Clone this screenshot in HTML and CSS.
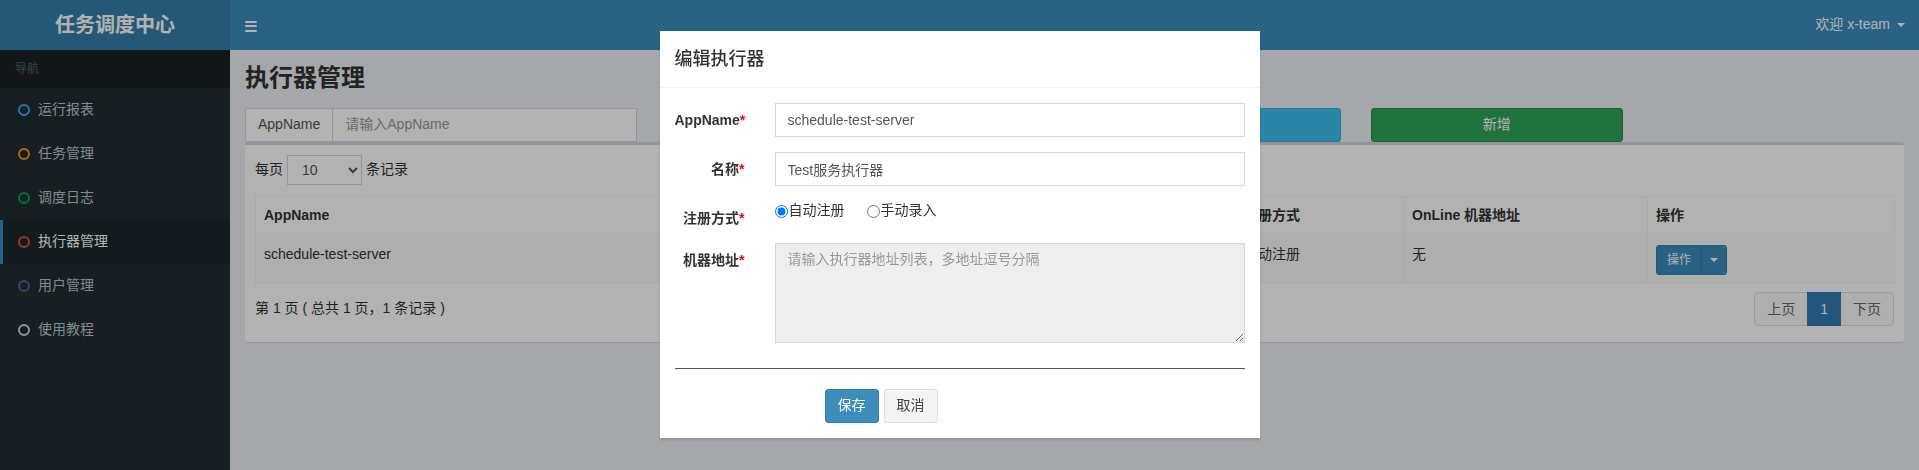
FILE: index.html
```html
<!DOCTYPE html>
<html lang="zh">
<head>
<meta charset="utf-8">
<title>任务调度中心</title>
<link rel="stylesheet" href="styles.css">
</head>
<body>
<div class="wrapper">
  <header class="main-header">
    <div class="logo">任务调度中心</div>
    <nav class="navbar">
      <div class="toggle"><span></span><span></span><span></span></div>
      <div class="user">欢迎 x-team <span class="caret"></span></div>
    </nav>
  </header>
  <div class="main">
    <aside class="sidebar">
      <div class="nav-header">导航</div>
      <ul class="menu">
        <li><i class="circle c-aqua"></i><span>运行报表</span></li>
        <li><i class="circle c-yellow"></i><span>任务管理</span></li>
        <li><i class="circle c-green"></i><span>调度日志</span></li>
        <li class="active"><i class="circle c-red"></i><span>执行器管理</span></li>
        <li><i class="circle c-purple"></i><span>用户管理</span></li>
        <li><i class="circle c-gray"></i><span>使用教程</span></li>
      </ul>
    </aside>
    <main class="content">
      <h1 class="page-title">执行器管理</h1>
      <div class="filter-row">
        <div class="col col-3">
          <div class="input-group"><span class="addon">AppName</span><input class="field" type="text" placeholder="请输入AppName"></div>
        </div>
        <div class="col col-3">
          <div class="input-group"><span class="addon addon-empty"></span><input class="field" type="text"></div>
        </div>
        <div class="col col-2"><button class="btn btn-info"></button></div>
        <div class="col col-2"><button class="btn btn-success">新增</button></div>
      </div>
      <div class="box">
        <div class="box-body">
          <div class="length-row">
            <span>每页</span>
            <select class="len-select"><option>10</option></select>
            <span>条记录</span>
          </div>
          <table class="table">
            <colgroup>
              <col class="w-app"><col class="w-name"><col class="w-order"><col class="w-type"><col class="w-online"><col class="w-op">
            </colgroup>
            <thead>
              <tr><th>AppName</th><th></th><th></th><th class="th-type">注册方式</th><th>OnLine 机器地址</th><th>操作</th></tr>
            </thead>
            <tbody>
              <tr>
                <td>schedule-test-server</td>
                <td></td>
                <td></td>
                <td>自动注册</td>
                <td>无</td>
                <td><div class="btn-group"><span class="bg-main">操作</span><span class="bg-caret"><span class="caret"></span></span></div></td>
              </tr>
            </tbody>
          </table>
          <div class="pager-row">
            <div class="info">第 1 页 ( 总共 1 页，1 条记录 )</div>
            <ul class="pagination">
              <li>上页</li>
              <li class="active">1</li>
              <li>下页</li>
            </ul>
          </div>
        </div>
      </div>
    </main>
  </div>
</div>

<div class="backdrop"></div>

<div class="modal-layer">
  <div class="modal">
    <div class="modal-header"><h4 class="modal-title">编辑执行器</h4></div>
    <div class="modal-body">
      <div class="form-group">
        <label class="form-label">AppName<span class="req">*</span></label>
        <div class="form-ctrl"><input class="form-input" type="text" value="schedule-test-server"></div>
      </div>
      <div class="form-group">
        <label class="form-label">名称<span class="req">*</span></label>
        <div class="form-ctrl"><input class="form-input" type="text" value="Test服务执行器"></div>
      </div>
      <div class="form-group">
        <label class="form-label">注册方式<span class="req">*</span></label>
        <div class="form-ctrl radios">
          <label class="radio"><input type="radio" name="addressType" checked>自动注册</label>
          <label class="radio"><input type="radio" name="addressType">手动录入</label>
        </div>
      </div>
      <div class="form-group last">
        <label class="form-label">机器地址<span class="req">*</span></label>
        <div class="form-ctrl"><textarea class="form-area" readonly placeholder="请输入执行器地址列表，多地址逗号分隔"></textarea></div>
      </div>
      <hr class="divider">
      <div class="actions">
        <button class="mbtn mbtn-primary">保存</button>
        <button class="mbtn mbtn-default">取消</button>
      </div>
    </div>
  </div>
</div>
</body>
</html>
```

FILE: styles.css
```css
* { box-sizing: border-box; }
html, body { margin: 0; height: 100%; }
body {
  font-family: "Liberation Sans", "Noto Sans CJK SC", sans-serif;
  font-size: 14px;
  line-height: 1.42857;
  color: #333;
  background: #ecf0f5;
  overflow: hidden;
}

.wrapper { display: flex; flex-direction: column; height: 470px; }

/* header */
.main-header { display: flex; height: 50px; flex: none; }
.logo {
  width: 230px; flex: none;
  background: #367fa9; color: #fff;
  font-size: 20px; font-weight: bold;
  line-height: 50px; text-align: center;
}
.navbar {
  flex: 1; background: #3c8dbc;
  display: flex; align-items: center; justify-content: space-between;
  padding: 0 14px 0 15px;
}
.toggle { display: flex; flex-direction: column; gap: 2.5px; width: 12px; margin-top: 2px; }
.toggle span { display: block; height: 2px; background: #fff; border-radius: 1px; }
.user { color: #fff; display: flex; align-items: center; gap: 7px; }
.caret {
  display: inline-block; width: 0; height: 0;
  border-top: 4px solid #fff;
  border-left: 4px solid transparent;
  border-right: 4px solid transparent;
}

/* sidebar */
.main { display: flex; flex: 1; min-height: 0; }
.sidebar { width: 230px; flex: none; background: #222d32; }
.nav-header {
  height: 38px; background: #1a2226; color: #4b646f;
  font-size: 12px; line-height: 18px; padding: 10px 15px;
}
.menu { list-style: none; margin: 0; padding: 0; }
.menu li {
  height: 44px; display: flex; align-items: center;
  padding-left: 15px; border-left: 3px solid transparent;
  color: #b8c7ce;
}
.menu li.active { background: #1e282c; border-left-color: #3c8dbc; color: #fff; }
.circle {
  width: 12px; height: 12px; border: 2px solid currentColor;
  border-radius: 50%; margin-right: 8px; flex: none;
}
.c-aqua { color: #2bb3e6; }
.c-yellow { color: #f39c12; }
.c-green { color: #00a65a; }
.c-red { color: #dd4b39; }
.c-purple { color: #605ca8; }
.c-gray { color: #d2d6de; }

/* content */
.content { flex: 1; padding: 15px; min-width: 0; }
.page-title { margin: 0; font-size: 24px; line-height: 26px; font-weight: bold; color: #333; }

.filter-row {
  display: grid; grid-template-columns: repeat(12, 1fr);
  margin: 17px -15px 0;
}
.col { padding: 0 15px; }
.col-3 { grid-column: span 3; }
.col-2 { grid-column: span 2; }
.input-group { display: flex; height: 34px; }
.addon {
  padding: 6px 12px; border: 1px solid #d2d6de; border-right: 0;
  background: #fff; color: #555; white-space: nowrap;
}
.addon-empty { width: 60px; }
.field {
  flex: 1; min-width: 0; border: 1px solid #d2d6de; padding: 6px 12px;
  font: inherit; color: #555; background: #fff; outline: none;
}
.field::placeholder { color: #999; }
.btn {
  display: block; width: 100%; height: 34px;
  border-radius: 3px; border: 1px solid transparent;
  font: inherit; color: #fff;
}
.btn-info { background: #3dbff0; border-color: #2eb0e0; }
.btn-success { background: #2fa45b; border-color: #28924f; }

/* box */
.box {
  background: #fff; border-top: 3px solid #d2d6de; border-radius: 3px;
  box-shadow: 0 1px 1px rgba(0,0,0,0.1);
}
.box-body { padding: 10px; }
.length-row { display: flex; align-items: center; gap: 4px; height: 30px; }
.len-select {
  width: 75px; height: 30px; border: 1px solid #d2d6de; border-radius: 0;
  background: #fff; font: inherit; color: #555; padding: 0 10px;
}

.table {
  width: 100%; margin-top: 11px; border-collapse: collapse;
  border: 1px solid #f4f4f4; table-layout: fixed;
}
.w-app { width: 420px; }
.w-name { width: 380px; }
.w-order { width: 180px; }
.w-type { width: 168px; }
.w-online { width: 244px; }
.w-op { width: 247px; }
.table th, .table td {
  border: 1px solid #f4f4f4; text-align: left; vertical-align: top;
  padding: 8px; line-height: 20px;
}
.table th { font-weight: bold; }
.table tbody tr { background: #f9f9f9; }
.table td { padding: 10px 8px 8px; }
.btn-group {
  display: inline-flex; height: 30px; border-radius: 3px; overflow: hidden;
  background: #3c8dbc; border: 1px solid #367fa9; color: #fff;
  font-size: 12px; line-height: 18px; margin-top: 1px;
}
.bg-main { padding: 5px 10px; }
.bg-caret { padding: 0 8px; display: flex; align-items: center; border-left: 1px solid #367fa9; }

.pager-row {
  display: flex; justify-content: space-between; align-items: center;
  margin-top: 8px; margin-bottom: 6px; height: 34px;
}
.pagination { list-style: none; margin: 0; padding: 0; display: flex; }
.pagination li {
  padding: 6px 12px; line-height: 20px; border: 1px solid #ddd;
  margin-left: -1px; background: #fafafa; color: #666;
}
.pagination li:first-child { border-radius: 4px 0 0 4px; margin-left: 0; }
.pagination li:last-child { border-radius: 0 4px 4px 0; }
.pagination li.active { background: #337ab7; border-color: #337ab7; color: #fff; position: relative; }

/* backdrop + modal */
.backdrop { position: fixed; inset: 0; background: rgba(0,0,0,0.3); }
.modal-layer {
  position: fixed; inset: 0;
  display: flex; justify-content: center; align-items: flex-start;
  padding-top: 31px;
}
.modal {
  width: 600px; background: #fff;
  box-shadow: 0 2px 3px rgba(0,0,0,0.125);
}
.modal-header { padding: 15px; border-bottom: 1px solid #f4f4f4; }
.modal-title { margin: 0; font-size: 18px; line-height: 26px; font-weight: 500; color: #333; }
.modal-body { padding: 15px; }
.form-group {
  display: grid; grid-template-columns: 70px 1fr; column-gap: 30px;
  margin-bottom: 15px;
}
.form-group.last { margin-bottom: 0; }
.form-label {
  font-weight: bold; text-align: right; padding-top: 7px;
  white-space: nowrap; line-height: 20px;
}
.req { color: #f00; }
.form-input {
  display: block; width: 100%; height: 34px;
  border: 1px solid #d2d6de; padding: 6px 12px;
  font: inherit; color: #555; outline: none;
}
.radios { display: flex; gap: 22px; height: 27px; }
.radio { display: inline-flex; align-items: center; height: 20px; }
.radio input { margin: 0 1px 0 0; width: 13px; height: 13px; }
.form-area {
  display: block; width: 100%; height: 100px;
  border: 1px solid #d2d6de; background: #eee;
  padding: 6px 12px; font: inherit; color: #555; resize: vertical; outline: none;
}
.form-area::placeholder { color: #999; }
.divider { margin: 25px 0 20px; border: 0; border-top: 1px solid #555; height: 0; }
.actions { display: flex; gap: 5px; padding-left: 150px; }
.mbtn {
  height: 34px; padding: 6px 12px; font: inherit;
  border-radius: 3px; border: 1px solid transparent;
}
.mbtn-primary { background: #3c8dbc; border-color: #367fa9; color: #fff; }
.mbtn-default { background: #f4f4f4; border-color: #ddd; color: #444; }
```
